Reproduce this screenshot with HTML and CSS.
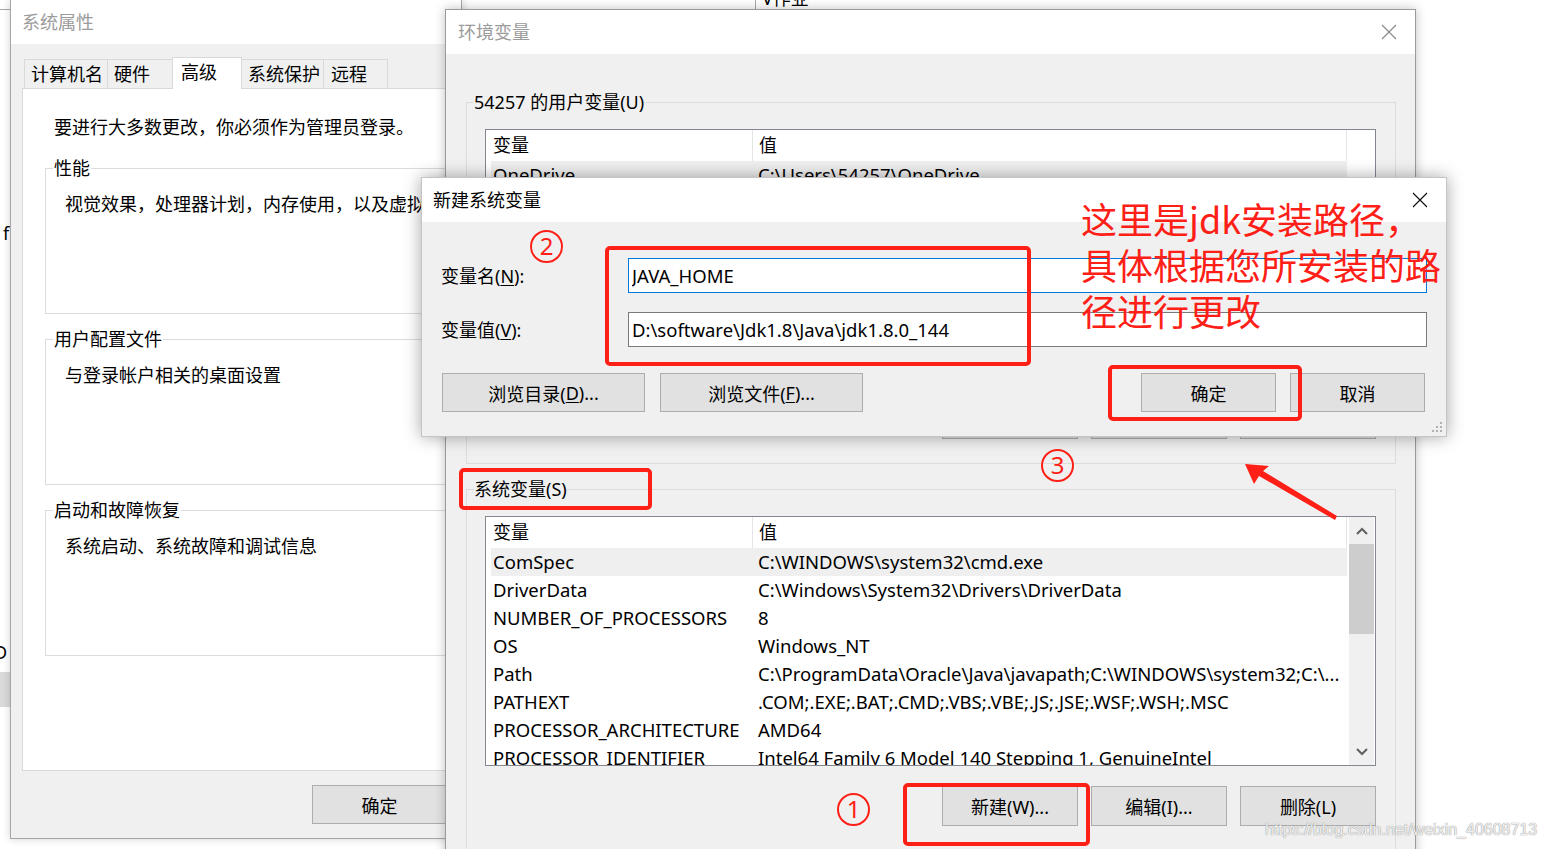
FILE: index.html
```html
<!DOCTYPE html>
<html lang="zh-CN">
<head>
<meta charset="utf-8">
<title>环境变量</title>
<link rel="stylesheet" href="styles.css">
</head>
<body>
<div class="desk">

  <div class="bgwin-top"></div>
  <span class="frag frag-v">V作业</span>
  <span class="frag frag-f">f</span>
  <span class="frag frag-d">D</span>
  <div class="frag-block"></div>

  <!-- 系统属性 -->
  <section class="win sys">
    <header class="titlebar"><span class="title dim">系统属性</span></header>
    <div class="sys-body">
      <div class="tabs">
        <span class="tab t1">计算机名</span>
        <span class="tab t2">硬件</span>
        <span class="tab t3 on">高级</span>
        <span class="tab t4">系统保护</span>
        <span class="tab t5">远程</span>
      </div>
      <div class="tabpanel">
        <p class="intro">要进行大多数更改，你必须作为管理员登录。</p>
        <fieldset class="grp">
          <legend>性能</legend>
          <p>视觉效果，处理器计划，内存使用，以及虚拟内存</p>
        </fieldset>
        <fieldset class="grp">
          <legend>用户配置文件</legend>
          <p>与登录帐户相关的桌面设置</p>
        </fieldset>
        <fieldset class="grp">
          <legend>启动和故障恢复</legend>
          <p>系统启动、系统故障和调试信息</p>
        </fieldset>
      </div>
      <div class="sys-acts">
        <button class="btn w135">确定</button>
        <button class="btn w135">取消</button>
      </div>
    </div>
  </section>

  <!-- 环境变量 -->
  <section class="win env">
    <header class="titlebar">
      <span class="title dim">环境变量</span>
      <svg class="close grey" width="16" height="16" viewBox="0 0 16 16"><path d="M1 1L15 15M15 1L1 15" stroke="#8a8a8a" stroke-width="1.2" fill="none"/></svg>
    </header>
    <div class="env-body">
      <fieldset class="egrp">
        <legend>54257 的用户变量(U)</legend>
        <div class="list">
          <div class="rows">
            <div class="hdr"><span class="c1">变量</span><span class="c2">值</span></div>
            <div class="row sel"><span class="c1">OneDrive</span><span class="c2">C:\Users\54257\OneDrive</span></div>
            <div class="row"><span class="c1">Path</span><span class="c2">C:\Users\54257\AppData\Local\Microsoft\WindowsApps;</span></div>
            <div class="row"><span class="c1">TEMP</span><span class="c2">C:\Users\54257\AppData\Local\Temp</span></div>
            <div class="row"><span class="c1">TMP</span><span class="c2">C:\Users\54257\AppData\Local\Temp</span></div>
          </div>
          <div class="sb blank"></div>
        </div>
        <div class="acts">
          <button class="btn w136">新建(N)...</button>
          <button class="btn w136">编辑(E)...</button>
          <button class="btn w136">删除(D)</button>
        </div>
      </fieldset>

      <fieldset class="egrp second">
        <legend>系统变量(S)</legend>
        <div class="list">
          <div class="rows">
            <div class="hdr"><span class="c1">变量</span><span class="c2">值</span></div>
            <div class="row sel"><span class="c1">ComSpec</span><span class="c2">C:\WINDOWS\system32\cmd.exe</span></div>
            <div class="row"><span class="c1">DriverData</span><span class="c2">C:\Windows\System32\Drivers\DriverData</span></div>
            <div class="row"><span class="c1">NUMBER_OF_PROCESSORS</span><span class="c2">8</span></div>
            <div class="row"><span class="c1">OS</span><span class="c2">Windows_NT</span></div>
            <div class="row"><span class="c1">Path</span><span class="c2">C:\ProgramData\Oracle\Java\javapath;C:\WINDOWS\system32;C:\...</span></div>
            <div class="row"><span class="c1">PATHEXT</span><span class="c2">.COM;.EXE;.BAT;.CMD;.VBS;.VBE;.JS;.JSE;.WSF;.WSH;.MSC</span></div>
            <div class="row"><span class="c1">PROCESSOR_ARCHITECTURE</span><span class="c2">AMD64</span></div>
            <div class="row"><span class="c1">PROCESSOR_IDENTIFIER</span><span class="c2">Intel64 Family 6 Model 140 Stepping 1, GenuineIntel</span></div>
          </div>
          <div class="sb">
            <span class="arr"><svg width="12" height="8" viewBox="0 0 12 8"><path d="M1 7L6 2L11 7" stroke="#606060" stroke-width="2" fill="none"/></svg></span>
            <span class="thumb"></span>
            <span class="track"></span>
            <span class="arr"><svg width="12" height="8" viewBox="0 0 12 8"><path d="M1 1L6 6L11 1" stroke="#606060" stroke-width="2" fill="none"/></svg></span>
          </div>
        </div>
        <div class="acts">
          <button class="btn w136">新建(W)...</button>
          <button class="btn w136">编辑(I)...</button>
          <button class="btn w136">删除(L)</button>
        </div>
      </fieldset>
    </div>
  </section>

  <!-- 新建系统变量 -->
  <section class="win dlg">
    <header class="titlebar">
      <span class="title">新建系统变量</span>
      <svg class="close" width="16" height="16" viewBox="0 0 16 16"><path d="M1 1L15 15M15 1L1 15" stroke="#111" stroke-width="1.2" fill="none"/></svg>
    </header>
    <div class="dlg-body">
      <div class="form">
        <label class="lbl" for="vn">变量名(<u>N</u>):</label>
        <input id="vn" class="field focus" type="text" value="JAVA_HOME" readonly>
        <label class="lbl" for="vv">变量值(<u>V</u>):</label>
        <input id="vv" class="field" type="text" value="D:\software\Jdk1.8\Java\jdk1.8.0_144" readonly>
      </div>
      <div class="dlg-acts">
        <button class="btn w203 first">浏览目录(<u>D</u>)...</button>
        <button class="btn w203">浏览文件(<u>F</u>)...</button>
        <div class="dlg-right">
          <button class="btn w135">确定</button>
          <button class="btn w135">取消</button>
        </div>
      </div>
    </div>
    <svg class="grip" width="12" height="12" viewBox="0 0 12 12">
      <rect x="9" y="1" width="2" height="2" fill="#b0b0b0"/>
      <rect x="5" y="5" width="2" height="2" fill="#b0b0b0"/>
      <rect x="9" y="5" width="2" height="2" fill="#b0b0b0"/>
      <rect x="1" y="9" width="2" height="2" fill="#b0b0b0"/>
      <rect x="5" y="9" width="2" height="2" fill="#b0b0b0"/>
      <rect x="9" y="9" width="2" height="2" fill="#b0b0b0"/>
    </svg>
  </section>

  <!-- 标注 -->
  <div class="mark m-inputs"></div>
  <div class="mark m-ok"></div>
  <div class="mark m-sys"></div>
  <div class="mark m-new"></div>
  <span class="num n2">2</span>
  <span class="num n3">3</span>
  <span class="num n1">1</span>
  <p class="note">这里是jdk安装路径，<br>具体根据您所安装的路<br>径进行更改</p>
  <svg class="arrow" width="1546" height="849" viewBox="0 0 1546 849">
    <polygon points="1245,464 1269,466 1263,471 1337,516 1335,520 1259,476 1254,484" fill="#fe2016"/>
  </svg>
  <span class="wm">https://blog.csdn.net/weixin_40608713</span>
</div>
</body>
</html>
```

FILE: styles.css
```css
* { box-sizing: border-box; }
html, body { margin: 0; padding: 0; }
body {
  width: 1546px;
  height: 849px;
  overflow: hidden;
  background: #fff;
  font-family: "Noto Sans", "Noto Sans CJK SC", sans-serif;
  font-size: 18px;
  color: #000;
}
p { margin: 0; }
u { text-decoration: underline; text-underline-offset: 2px; text-decoration-thickness: 1px; }

.desk { position: relative; width: 1546px; height: 849px; overflow: hidden; background: #fff; }

/* background fragments */
.bgwin-top {
  position: absolute; left: -2px; top: -40px; width: 758px; height: 50px;
  background: #fff; border: 1px solid #a8a8a8;
}
.frag { position: absolute; font-size: 18px; line-height: 24px; white-space: nowrap; color: #000; }
.frag-v { left: 762px; top: -14px; }
.frag-f { left: 3px; top: 221px; }
.frag-d { left: -6px; top: 640px; }
.frag-block { position: absolute; left: 0; top: 672px; width: 10px; height: 35px; background: #dadada; }

/* windows */
.win { position: absolute; display: flex; flex-direction: column; background: #f0f0f0; }
.titlebar {
  flex: none; height: 44px; background: #fff;
  display: flex; align-items: center; justify-content: space-between;
}
.title { line-height: 44px; white-space: nowrap; }
.title.dim { color: #9b9b9b; }
.close { flex: none; margin-right: 18px; }

.btn {
  flex: none;
  font: inherit; color: #000; padding: 0; margin: 0;
  height: 39px; background: #e1e1e1; border: 1px solid #adadad;
  display: inline-flex; align-items: center; justify-content: center; white-space: nowrap;
}
.w135 { width: 135px; }
.w136 { width: 136px; height: 40px; }
.w203 { width: 203px; }

/* 系统属性 */
.sys {
  left: 10px; top: -1px; width: 452px; height: 840px;
  border: 1px solid #a6a6a6; box-shadow: 0 0 8px rgba(0,0,0,.18);
}
.sys .titlebar { padding-left: 11px; }
.sys-body { flex: 1; padding: 13px 0 0 11px; }
.tabs { display: flex; align-items: flex-end; height: 31px; margin-left: 2px; }
.tab {
  height: 29px; line-height: 28px; padding-left: 6px; white-space: nowrap;
  border: 1px solid #d9d9d9; border-bottom: none; background: #f0f0f0; margin-left: -1px;
}
.tab.t1 { width: 84px; margin-left: 0; }
.tab.t2 { width: 66px; }
.tab.t3 { width: 70px; padding-left: 8px; }
.tab.t4 { width: 83px; }
.tab.t5 { width: 65px; padding-left: 7px; }
.tab.on { height: 32px; background: #fff; margin-bottom: -1px; position: relative; z-index: 1; }
.tabpanel {
  height: 683px; margin-right: -30px; background: #fff;
  border: 1px solid #d9d9d9; padding: 26px 0 0 22px;
}
.intro { margin-left: 9px; line-height: 24px; white-space: nowrap; }
.grp {
  margin: 13px 0 0 0; padding: 0 0 97px 7px; min-width: 0;
  border: 1px solid #dcdcdc;
}
.intro + .grp { margin-top: 17px; }
.grp legend { padding: 0 1px; line-height: 24px; }
.grp p { margin: 12px 0 0 12px; line-height: 24px; white-space: nowrap; }
.sys-acts { display: flex; gap: 10px; margin: 14px 0 0 290px; }

/* 环境变量 */
.env {
  left: 445px; top: 9px; width: 971px; height: 860px;
  border: 1px solid #9b9b9b; box-shadow: 0 0 10px rgba(0,0,0,.25);
}
.env .titlebar { padding-left: 12px; }
.env-body { flex: 1; padding: 36px 19px 0 20px; }
.egrp { margin: 0; padding: 0 0 24px 7px; min-width: 0; border: 1px solid #dcdcdc; }
.egrp.second { margin-top: 13px; }
.egrp legend { padding: 0; line-height: 24px; }
.list {
  display: flex; height: 250px; margin: 15px 19px 0 11px;
  border: 1px solid #828790; background: #fff; overflow: hidden;
}
.rows { flex: 1; min-width: 0; padding: 0 2px 0 5px; overflow: hidden; font-size: 18.5px; }
.hdr, .row { display: grid; grid-template-columns: 261px 1fr; white-space: nowrap; }
.hdr { height: 31px; line-height: 31px; border-right: 1px solid #e5e5e5; font-size: 18px; }
.row { height: 28px; line-height: 28px; }
.row.sel { background: #efefef; }
.c1 { padding-left: 2px; overflow: hidden; }
.c2 { padding-left: 6px; overflow: hidden; }
.hdr .c2 { border-left: 1px solid #e5e5e5; }
.sb { flex: none; width: 25px; margin-right: 1px; display: flex; flex-direction: column; background: #f0f0f0; }
.sb.blank { background: #fff; }
.arr { flex: none; height: 27px; display: flex; align-items: center; justify-content: center; }
.thumb { flex: none; height: 90px; background: #cdcdcd; }
.track { flex: 1; }
.acts { display: flex; justify-content: flex-end; gap: 13px; margin: 20px 19px 0 0; }

/* 新建系统变量 */
.dlg {
  left: 421px; top: 177px; width: 1026px; height: 260px;
  border: 1px solid #c4c4c4; box-shadow: 0 0 16px rgba(0,0,0,.35);
}
.dlg .titlebar { padding-left: 11px; }
.dlg-body { flex: 1; padding: 36px 19px 0 19px; }
.form { display: grid; grid-template-columns: 187px 1fr; row-gap: 19px; align-items: center; }
.lbl { line-height: 24px; white-space: nowrap; }
.field {
  font: inherit; font-size: 18.5px; color: #000; height: 35px; margin: 0;
  border: 1px solid #7a7a7a; background: #fff; padding: 0 0 0 3px; outline: none;
}
.field.focus { border-color: #0078d7; }
.dlg-acts { display: flex; gap: 15px; margin-top: 26px; }
.dlg-acts .first { margin-left: 1px; }
.dlg-right { display: flex; gap: 14px; margin-left: auto; margin-right: 2px; }
.grip { position: absolute; right: 3px; bottom: 3px; }

/* annotations */
.mark { position: absolute; border: 4px solid #fe2016; border-radius: 5px; }
.m-inputs { left: 605px; top: 246px; width: 426px; height: 120px; }
.m-ok { left: 1108px; top: 365px; width: 194px; height: 56px; }
.m-sys { left: 459px; top: 468px; width: 193px; height: 42px; }
.m-new { left: 903px; top: 783px; width: 187px; height: 63px; }
.num {
  position: absolute; width: 33px; height: 33px; border: 2.5px solid #fe2016; border-radius: 50%;
  color: #fe2016; font: 24px/28px "Noto Sans", sans-serif; text-align: center;
}
.n2 { left: 530px; top: 230px; }
.n3 { left: 1041px; top: 449px; }
.n1 { left: 837px; top: 793px; }
.note {
  position: absolute; left: 1081px; top: 195px; margin: 0;
  font: 36px/46px "Noto Sans CJK SC", "Noto Sans", sans-serif; color: #fe2016; white-space: nowrap;
}
.arrow { position: absolute; left: 0; top: 0; pointer-events: none; }
.wm {
  position: absolute; left: 1265px; top: 819px; white-space: nowrap;
  font: 16px/22px "Liberation Sans", Arial, sans-serif;
  color: rgba(255,255,255,.85); text-shadow: 0 0 1px #999, 0 0 1px #999;
}
```
